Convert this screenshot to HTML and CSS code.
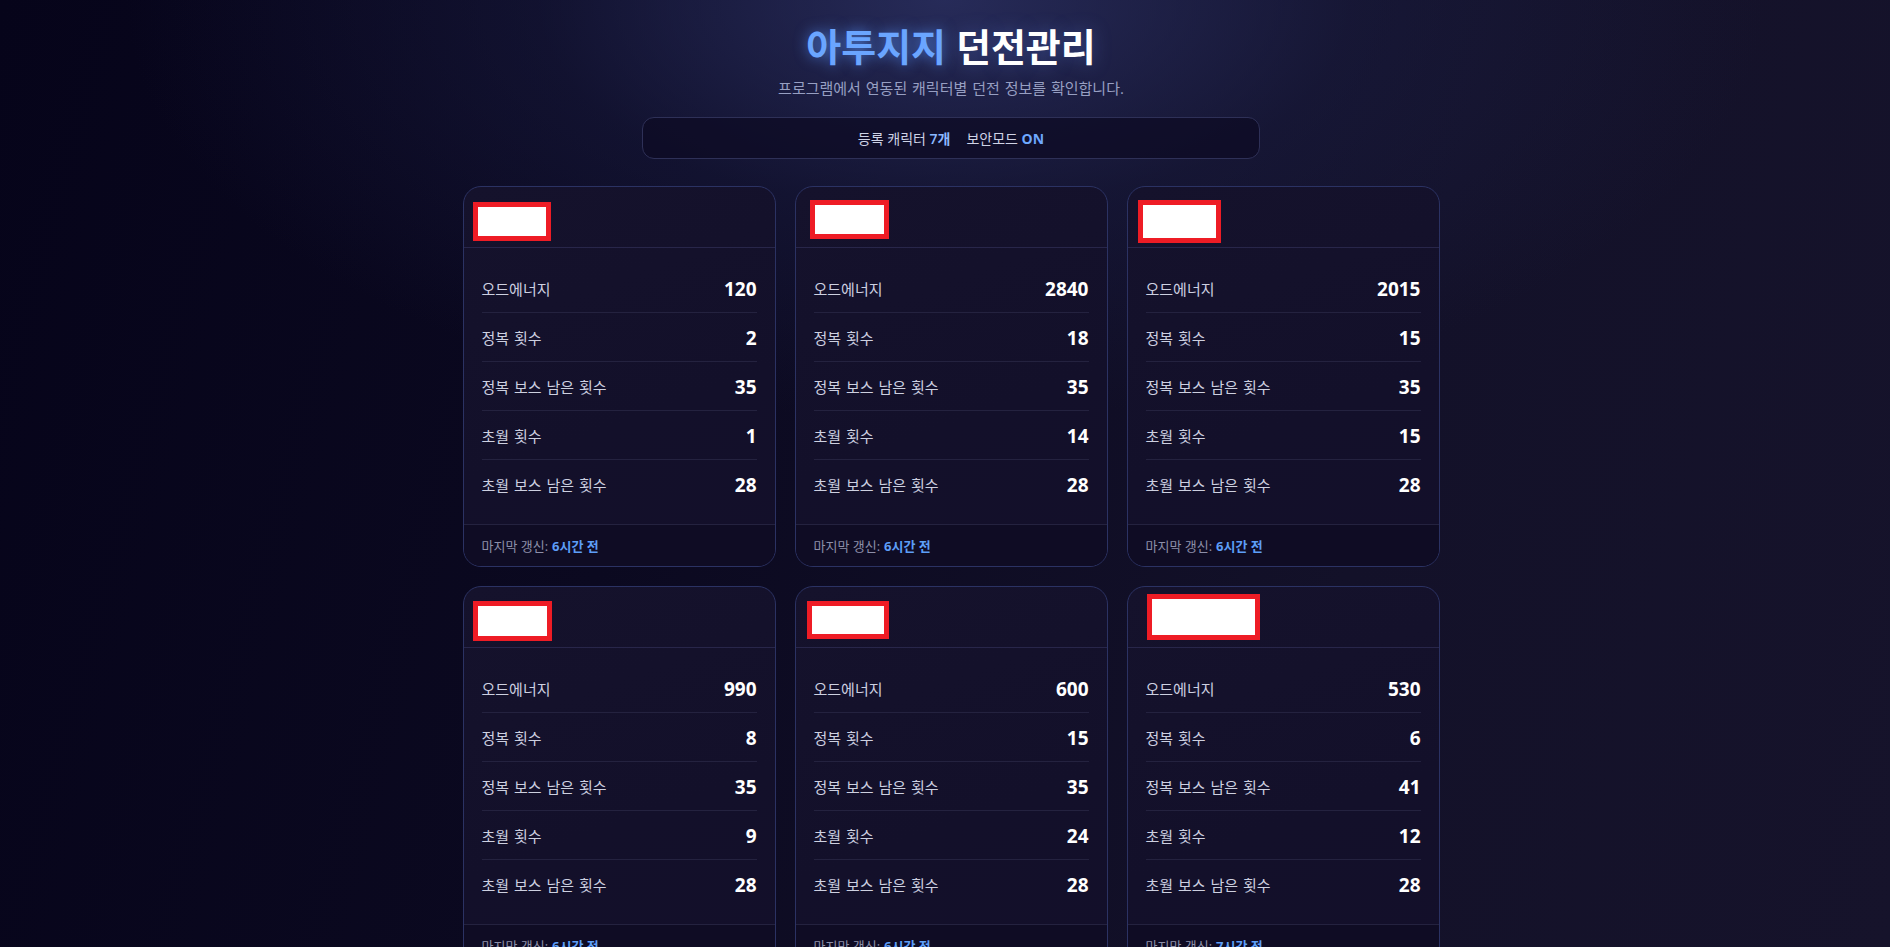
FILE: index.html
```html
<!DOCTYPE html>
<html lang="ko">
<head>
<meta charset="utf-8">
<title>아투지지 던전관리</title>
<link rel="stylesheet" href="styles.css">
</head>
<body>
<div class="page">
  <header class="hero">
    <h1 class="title"><span class="title-accent">아투지지</span> 던전관리</h1>
    <p class="subtitle">프로그램에서 연동된 캐릭터별 던전 정보를 확인합니다.</p>
    <div class="summary">
      <span class="summary-item">등록 캐릭터 <b class="hl">7개</b></span>
      <span class="summary-item">보안모드 <b class="hl strong">ON</b></span>
    </div>
  </header>

  <main class="grid">
    <section class="card">
      <div class="card-head"><span class="redact r1"></span></div>
      <div class="card-body">
        <div class="row"><span class="label">오드에너지</span><span class="value">120</span></div>
        <div class="row"><span class="label">정복 횟수</span><span class="value">2</span></div>
        <div class="row"><span class="label">정복 보스 남은 횟수</span><span class="value">35</span></div>
        <div class="row"><span class="label">초월 횟수</span><span class="value">1</span></div>
        <div class="row"><span class="label">초월 보스 남은 횟수</span><span class="value">28</span></div>
      </div>
      <div class="card-foot">마지막 갱신: <b class="time">6시간 전</b></div>
    </section>

    <section class="card">
      <div class="card-head"><span class="redact r2"></span></div>
      <div class="card-body">
        <div class="row"><span class="label">오드에너지</span><span class="value">2840</span></div>
        <div class="row"><span class="label">정복 횟수</span><span class="value">18</span></div>
        <div class="row"><span class="label">정복 보스 남은 횟수</span><span class="value">35</span></div>
        <div class="row"><span class="label">초월 횟수</span><span class="value">14</span></div>
        <div class="row"><span class="label">초월 보스 남은 횟수</span><span class="value">28</span></div>
      </div>
      <div class="card-foot">마지막 갱신: <b class="time">6시간 전</b></div>
    </section>

    <section class="card">
      <div class="card-head"><span class="redact r3"></span></div>
      <div class="card-body">
        <div class="row"><span class="label">오드에너지</span><span class="value">2015</span></div>
        <div class="row"><span class="label">정복 횟수</span><span class="value">15</span></div>
        <div class="row"><span class="label">정복 보스 남은 횟수</span><span class="value">35</span></div>
        <div class="row"><span class="label">초월 횟수</span><span class="value">15</span></div>
        <div class="row"><span class="label">초월 보스 남은 횟수</span><span class="value">28</span></div>
      </div>
      <div class="card-foot">마지막 갱신: <b class="time">6시간 전</b></div>
    </section>

    <section class="card">
      <div class="card-head"><span class="redact r4"></span></div>
      <div class="card-body">
        <div class="row"><span class="label">오드에너지</span><span class="value">990</span></div>
        <div class="row"><span class="label">정복 횟수</span><span class="value">8</span></div>
        <div class="row"><span class="label">정복 보스 남은 횟수</span><span class="value">35</span></div>
        <div class="row"><span class="label">초월 횟수</span><span class="value">9</span></div>
        <div class="row"><span class="label">초월 보스 남은 횟수</span><span class="value">28</span></div>
      </div>
      <div class="card-foot">마지막 갱신: <b class="time">6시간 전</b></div>
    </section>

    <section class="card">
      <div class="card-head"><span class="redact r5"></span></div>
      <div class="card-body">
        <div class="row"><span class="label">오드에너지</span><span class="value">600</span></div>
        <div class="row"><span class="label">정복 횟수</span><span class="value">15</span></div>
        <div class="row"><span class="label">정복 보스 남은 횟수</span><span class="value">35</span></div>
        <div class="row"><span class="label">초월 횟수</span><span class="value">24</span></div>
        <div class="row"><span class="label">초월 보스 남은 횟수</span><span class="value">28</span></div>
      </div>
      <div class="card-foot">마지막 갱신: <b class="time">6시간 전</b></div>
    </section>

    <section class="card">
      <div class="card-head"><span class="redact r6"></span></div>
      <div class="card-body">
        <div class="row"><span class="label">오드에너지</span><span class="value">530</span></div>
        <div class="row"><span class="label">정복 횟수</span><span class="value">6</span></div>
        <div class="row"><span class="label">정복 보스 남은 횟수</span><span class="value">41</span></div>
        <div class="row"><span class="label">초월 횟수</span><span class="value">12</span></div>
        <div class="row"><span class="label">초월 보스 남은 횟수</span><span class="value">28</span></div>
      </div>
      <div class="card-foot">마지막 갱신: <b class="time">7시간 전</b></div>
    </section>
  </main>
</div>
</body>
</html>
```

FILE: styles.css
```css
* { box-sizing: border-box; }

html, body {
  margin: 0;
  padding: 0;
}

body {
  min-height: 100vh;
  font-family: "Open Sans", "Noto Sans CJK KR", sans-serif;
  color: #e6e8f2;
  background:
    radial-gradient(ellipse 820px 420px at 50% 0%, rgba(46, 52, 104, 0.78) 0%, rgba(30, 34, 75, 0.38) 50%, rgba(20, 20, 50, 0) 100%),
    linear-gradient(105deg, #06041a 0%, #0b0920 35%, #131129 70%, #16132b 100%);
  background-attachment: fixed;
  padding-left: 12px;
}

.page {
  width: 977px;
  margin: 0 auto;
  padding-bottom: 40px;
}

.hero {
  display: flex;
  flex-direction: column;
  align-items: center;
  padding-top: 24px;
}

.title {
  margin: 0;
  font-size: 38px;
  line-height: 44px;
  font-weight: 700;
  color: #ffffff;
  text-shadow: 0 0 18px rgba(110, 150, 255, 0.35);
}

.title-accent {
  color: #6aa5ff;
  text-shadow: 0 0 14px rgba(90, 150, 255, 0.75);
}

.subtitle {
  margin: 10px 0 0;
  font-size: 15px;
  line-height: 20px;
  color: #979fc2;
  word-spacing: 1px;
}

.summary {
  margin-top: 19px;
  width: 618px;
  height: 42px;
  display: flex;
  align-items: center;
  justify-content: center;
  gap: 16px;
  border: 1px solid #2e3057;
  border-radius: 12px;
  background: rgba(14, 11, 36, 0.75);
  font-size: 14px;
  color: #cfd3e6;
}

.summary-item { white-space: nowrap; }

.hl {
  color: #8cb8ff;
  font-weight: 600;
}

.hl.strong {
  color: #6ea8ff;
  font-weight: 700;
}

.grid {
  margin-top: 27px;
  display: grid;
  grid-template-columns: repeat(3, 313px);
  gap: 19px;
}

.card {
  position: relative;
  border: 1px solid #2b3263;
  border-radius: 18px;
  background: linear-gradient(160deg, #15122c 0%, #13102a 60%, #130f2a 100%);
  overflow: hidden;
}

.card-head {
  position: relative;
  height: 61px;
  border-bottom: 1px solid #28264a;
}

.redact {
  position: absolute;
  border: 5px solid #ee1c25;
  background: #ffffff;
}

.r1 { left: 9px;  top: 15px; width: 78px;  height: 39px; }
.r2 { left: 14px; top: 13px; width: 79px;  height: 39px; }
.r3 { left: 10px; top: 13px; width: 83px;  height: 43px; }
.r4 { left: 9px;  top: 14px; width: 79px;  height: 40px; }
.r5 { left: 11px; top: 14px; width: 82px;  height: 38px; }
.r6 { left: 19px; top: 7px;  width: 113px; height: 46px; }

.card-body {
  padding: 16px 18px 16px;
}

.row {
  height: 49px;
  display: flex;
  align-items: center;
  justify-content: space-between;
  border-bottom: 1px solid #24223f;
}

.row:last-child {
  height: 48px;
  border-bottom: none;
}

.label {
  font-size: 15px;
  color: #cdd0e0;
  word-spacing: 1px;
}

.value {
  font-size: 19px;
  font-weight: 700;
  color: #ffffff;
  padding-top: 1px;
}

.card-foot {
  height: 42px;
  display: flex;
  align-items: center;
  padding: 0 18px;
  border-top: 1px solid #24223f;
  background: #0f0c24;
  font-size: 13px;
  color: #8d8fa9;
}

.time {
  margin-left: 4px;
  color: #5d9ef7;
  font-weight: 700;
}
```
